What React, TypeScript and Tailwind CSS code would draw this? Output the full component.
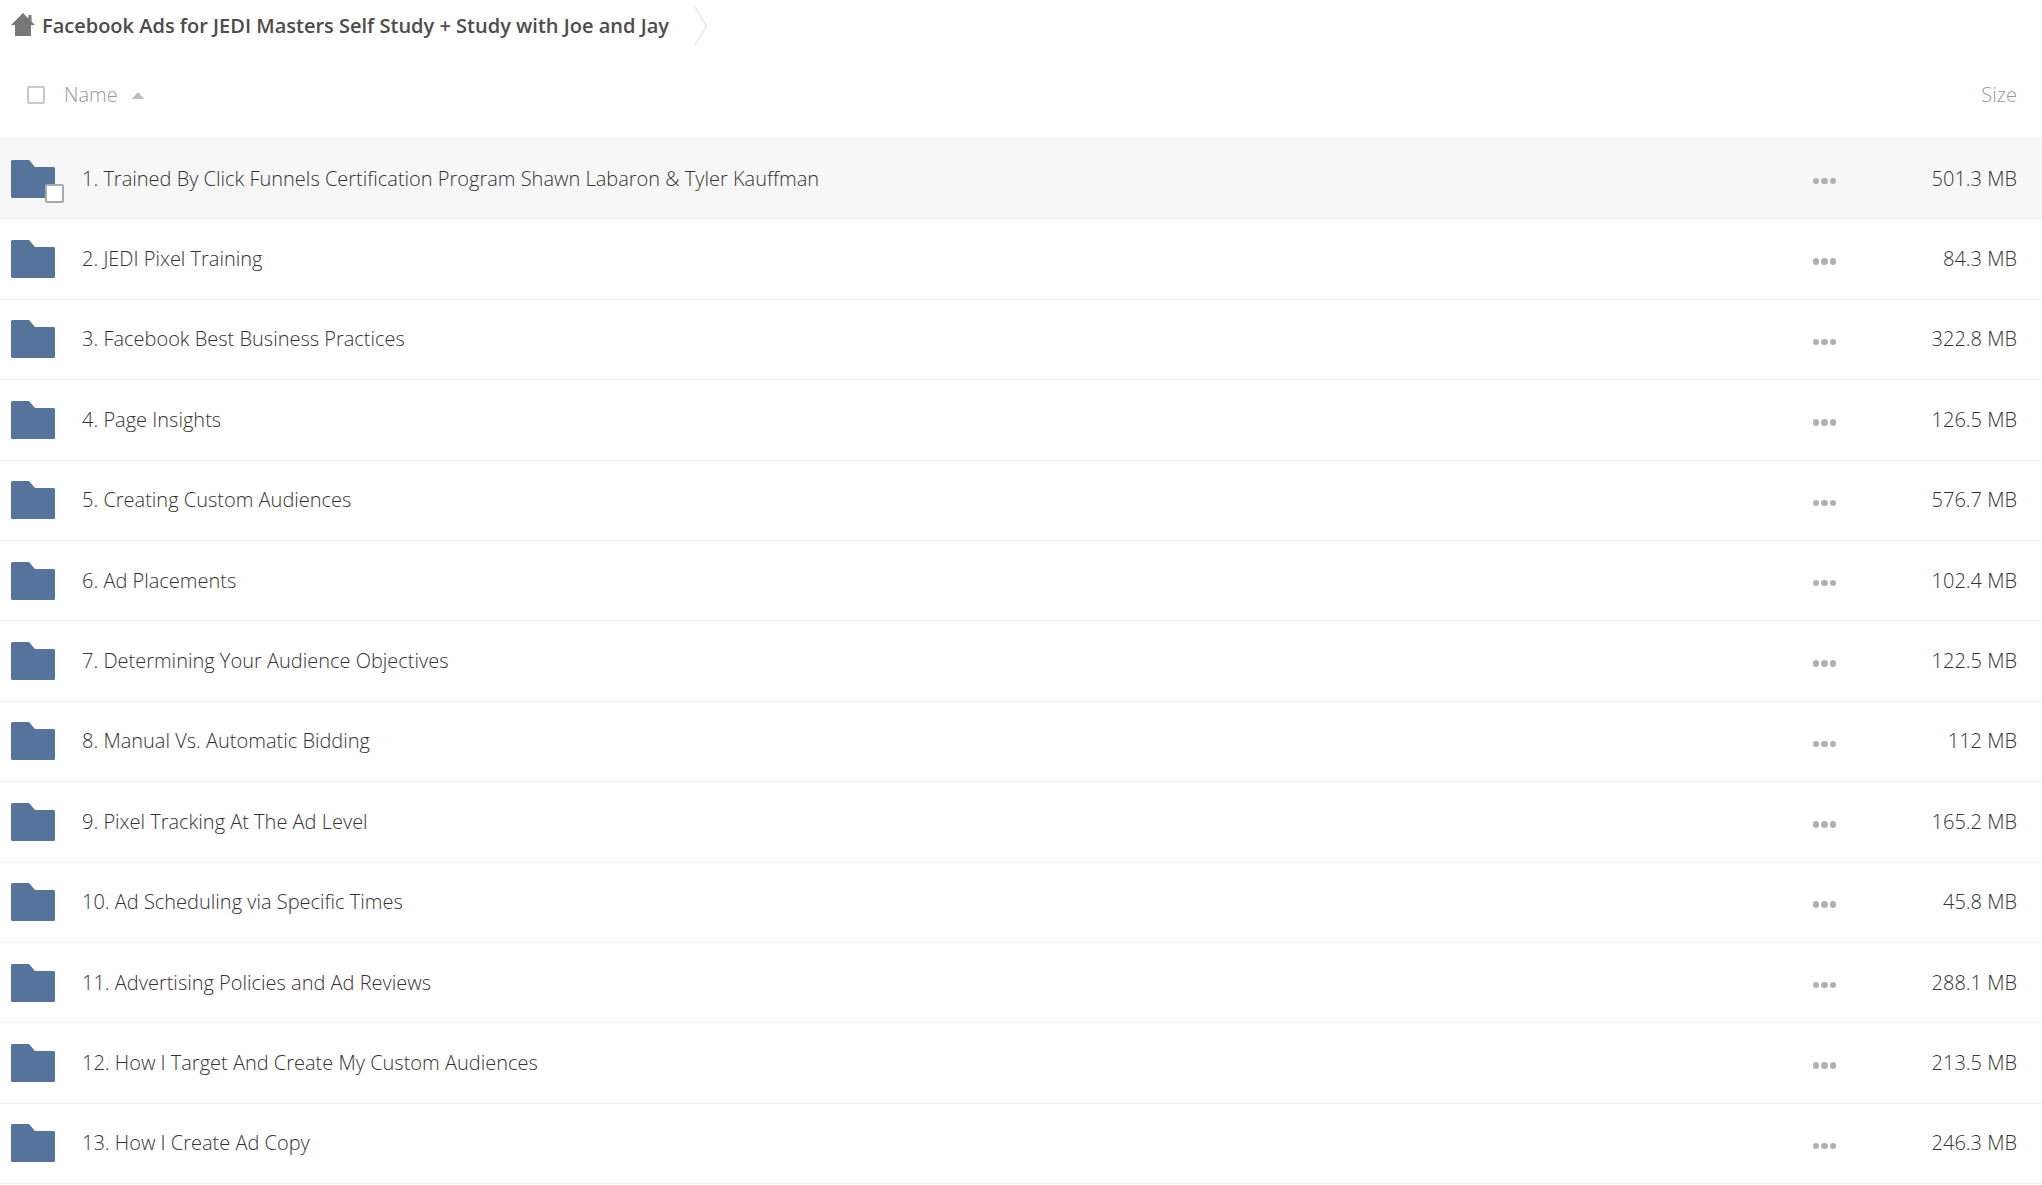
const rows: [string, string][] = [
  ["1. Trained By Click Funnels Certification Program Shawn Labaron & Tyler Kauffman", "501.3 MB"],
  ["2. JEDI Pixel Training", "84.3 MB"],
  ["3. Facebook Best Business Practices", "322.8 MB"],
  ["4. Page Insights", "126.5 MB"],
  ["5. Creating Custom Audiences", "576.7 MB"],
  ["6. Ad Placements", "102.4 MB"],
  ["7. Determining Your Audience Objectives", "122.5 MB"],
  ["8. Manual Vs. Automatic Bidding", "112 MB"],
  ["9. Pixel Tracking At The Ad Level", "165.2 MB"],
  ["10. Ad Scheduling via Specific Times", "45.8 MB"],
  ["11. Advertising Policies and Ad Reviews", "288.1 MB"],
  ["12. How I Target And Create My Custom Audiences", "213.5 MB"],
  ["13. How I Create Ad Copy", "246.3 MB"],
];

function Folder() {
  return (
    <svg width="44" height="38" viewBox="0 0 44 38" className="block">
      <path d="M1.5 0H18L24 7H42.5Q44 7 44 8.5V36.5Q44 38 42.5 38H1.5Q0 38 0 36.5V1.5Q0 0 1.5 0Z" fill="#55739b" />
    </svg>
  );
}

export default function App() {
  return (
    <div className="h-[1185px] w-[2042px] overflow-hidden bg-white font-['Open_Sans',sans-serif]">
      <div className="flex h-[52px] items-center pl-[11px]">
        <svg width="24" height="24" viewBox="0 0 24 24" className="mb-[2px] block">
          <path d="M12 0L17.5 5.5V2H20.5V8.5L24 12H20V23H4V12H0Z" fill="#777777" />
        </svg>
        <span className="ml-[7px] text-[20px] font-semibold leading-none text-[#4c4c4c]">
          Facebook Ads for JEDI Masters Self Study + Study with Joe and Jay
        </span>
        <svg width="14" height="40" viewBox="0 0 14 40" className="ml-[25px] block">
          <path d="M1 1L12.5 20L1 39" fill="none" stroke="#dddddd" strokeWidth="1" />
        </svg>
      </div>
      <div className="flex h-[87px] items-center border-b border-[#eeeeee] pl-[27px] pr-[25px]">
        <div className="h-[18px] w-[18px] rounded-[2px] border-2 border-[#c8c8c8]" />
        <span className="ml-[19px] text-[20px] font-light text-[#999999]">Name</span>
        <div className="ml-[14px] h-0 w-0 border-x-[6.5px] border-b-[7px] border-x-transparent border-b-[#bbbbbb]" />
        <span className="ml-auto text-[20px] font-light text-[#999999]">Size</span>
      </div>
      {rows.map(([name, size], i) => (
        <div
          key={name}
          className={`flex h-[80.4px] items-center border-b border-[#eeeeee] pl-[11px] pr-[25px] ${i === 0 ? "bg-[#f7f7f7]" : "bg-white"}`}
        >
          <div className="relative">
            <Folder />
            {i === 0 && (
              <div className="absolute left-[34px] top-[24px] h-[19px] w-[19px] rounded-[2px] border-2 border-[#a9a9a9] bg-white" />
            )}
          </div>
          <span className="ml-[27px] flex-1 text-[20px] font-light text-[#333333]">{name}</span>
          <div className="mt-[5px] flex gap-[2px]">
            <span className="h-[6.5px] w-[6.5px] rounded-full bg-[#b0b0b0]" />
            <span className="h-[6.5px] w-[6.5px] rounded-full bg-[#b0b0b0]" />
            <span className="h-[6.5px] w-[6.5px] rounded-full bg-[#b0b0b0]" />
          </div>
          <span className="w-[181px] text-right text-[20px] font-light text-[#333333]">{size}</span>
        </div>
      ))}
    </div>
  );
}
